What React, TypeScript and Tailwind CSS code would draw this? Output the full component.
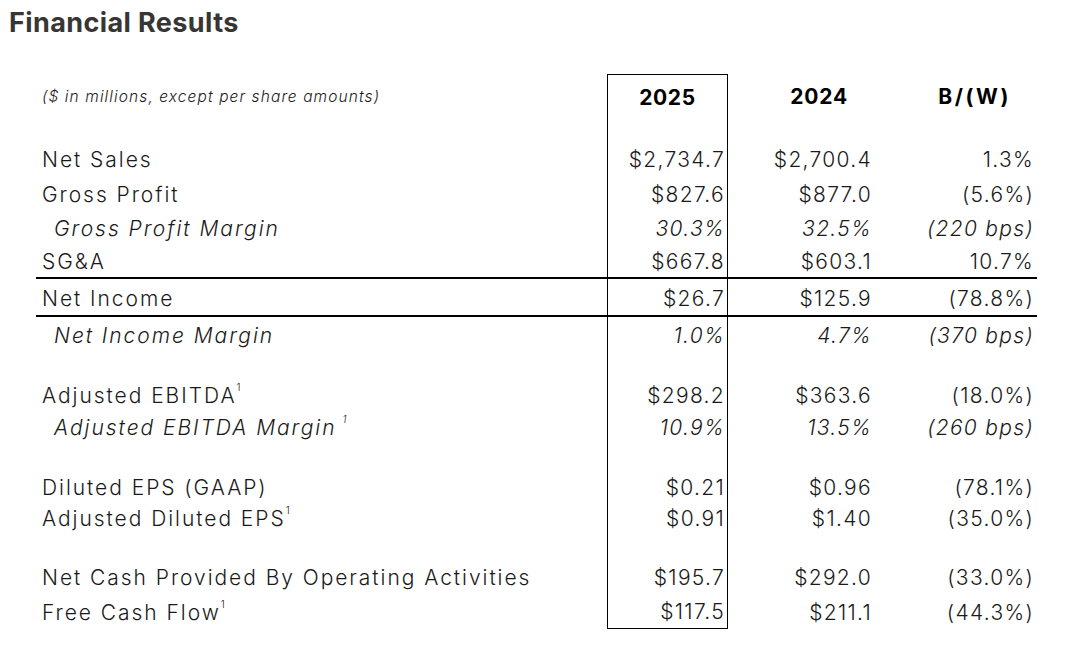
import type { ReactNode } from "react";

type Row = {
  label?: ReactNode;
  v1?: string;
  v2?: string;
  v3?: string;
  italic?: boolean;
  h: string;
  line?: boolean;
  last?: boolean;
};

const Sup = ({ italic }: { italic?: boolean }) => (
  <span className={`relative -top-[8px] text-[10px] tracking-normal ${italic ? "ml-[6px]" : "ml-[0px]"}`}>1</span>
);

const rows: Row[] = [
  { h: "h-[21px]" },
  { label: "Net Sales", v1: "$2,734.7", v2: "$2,700.4", v3: "1.3%", h: "h-[35px]" },
  { label: "Gross Profit", v1: "$827.6", v2: "$877.0", v3: "(5.6%)", h: "h-[34px]" },
  { label: "Gross Profit Margin", v1: "30.3%", v2: "32.5%", v3: "(220 bps)", italic: true, h: "h-[33px]" },
  { label: "SG&A", v1: "$667.8", v2: "$603.1", v3: "10.7%", h: "h-[36px]", line: true },
  { label: "Net Income", v1: "$26.7", v2: "$125.9", v3: "(78.8%)", h: "h-[38px]", line: true },
  { label: "Net Income Margin", v1: "1.0%", v2: "4.7%", v3: "(370 bps)", italic: true, h: "h-[32px]" },
  { h: "h-[28px]" },
  {
    label: (
      <>
        Adjusted EBITDA
        <Sup />
      </>
    ),
    v1: "$298.2",
    v2: "$363.6",
    v3: "(18.0%)",
    h: "h-[32px]",
  },
  {
    label: (
      <>
        Adjusted EBITDA Margin
        <Sup italic />
      </>
    ),
    v1: "10.9%",
    v2: "13.5%",
    v3: "(260 bps)",
    italic: true,
    h: "h-[30px]",
  },
  { h: "h-[30px]" },
  { label: "Diluted EPS (GAAP)", v1: "$0.21", v2: "$0.96", v3: "(78.1%)", h: "h-[31px]" },
  {
    label: (
      <>
        Adjusted Diluted EPS
        <Sup />
      </>
    ),
    v1: "$0.91",
    v2: "$1.40",
    v3: "(35.0%)",
    h: "h-[30px]",
  },
  { h: "h-[29px]" },
  { label: "Net Cash Provided By Operating Activities", v1: "$195.7", v2: "$292.0", v3: "(33.0%)", h: "h-[34px]" },
  {
    label: (
      <>
        Free Cash Flow
        <Sup />
      </>
    ),
    v1: "$117.5",
    v2: "$211.1",
    v3: "(44.3%)",
    h: "h-[36px]",
    last: true,
  },
];

export default function App() {
  return (
    <div
      className="w-[1080px] h-[653px] bg-white text-[#1a1a1a] overflow-hidden"
      style={{ fontFamily: "Inter, 'DejaVu Sans', sans-serif" }}
    >
      <h1 className="pl-[9px] pt-[6px] text-[27px] leading-[34px] font-bold text-[#383634] tracking-[0.4px]">
        Financial Results
      </h1>

      <div className="mt-[34px] ml-[36px] w-[1001px] text-[21px]">
        {/* header */}
        <div className="grid grid-cols-[571px_121px_152px_157px] h-[46px]">
          <div className="flex items-center pl-[6px] text-[15.5px] italic tracking-[1.1px] font-light">
            ($ in millions, except per share amounts)
          </div>
          <div className="flex items-center justify-center border-t-[1.5px] border-x-[1.5px] border-black font-bold tracking-[0.6px] text-black">
            2025
          </div>
          <div className="flex items-center justify-end pr-[32px] font-bold tracking-[0.8px] text-black">2024</div>
          <div className="flex items-center justify-end pr-[26px] font-bold tracking-[2.6px] text-black">B/(W)</div>
        </div>

        {rows.map((r, i) => (
          <div
            key={i}
            className={`grid grid-cols-[571px_121px_152px_157px] ${r.h} ${r.line ? "border-b-2 border-black" : ""} ${
              r.italic ? "italic" : ""
            } font-[350]`}
          >
            <div
              className={`flex items-center pt-[3px] whitespace-nowrap tracking-[1.95px] ${
                r.italic ? "pl-[18px]" : "pl-[6px]"
              }`}
            >
              {r.label}
            </div>
            <div
              className={`flex items-center justify-end pt-[3px] pr-[2px] tracking-[1.3px] border-x-[1.5px] border-black ${
                r.last ? "border-b-[1.5px]" : ""
              }`}
            >
              {r.v1}
            </div>
            <div className="flex items-center justify-end pt-[3px] pr-[8px] tracking-[1.3px]">{r.v2}</div>
            <div className="flex items-center justify-end pt-[3px] pr-[3px] tracking-[1.3px]">{r.v3}</div>
          </div>
        ))}
      </div>
    </div>
  );
}
